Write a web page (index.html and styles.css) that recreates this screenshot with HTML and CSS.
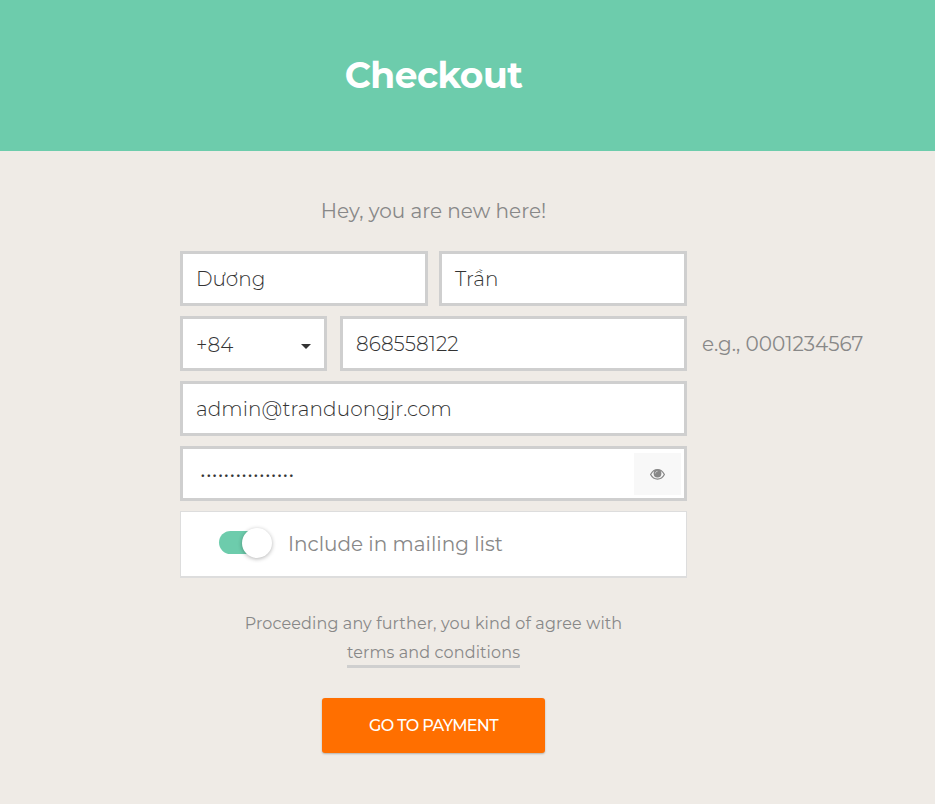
FILE: index.html
```
<!DOCTYPE html>
<html lang="en">
<head>
<meta charset="utf-8">
<title>Checkout</title>
<link rel="stylesheet" href="styles.css">
</head>
<body>
<header class="header"><h1 class="title"><span>Checkout</span></h1></header>
<main class="main">
  <p class="greeting"><span>Hey, you are new here!</span></p>
  <form class="form">
    <div class="row names">
      <div class="field"><span class="first-name">Dương</span></div>
      <div class="field"><span class="last-name">Trần</span></div>
    </div>
    <div class="row phone">
      <div class="field code"><span class="prefix">+84</span>
        <svg class="caret" width="10" height="5" viewBox="0 0 10 5"><path d="M0 0h10L5 5z" fill="#333"/></svg>
      </div>
      <div class="field"><span class="number">868558122</span></div>
      <span class="hint">e.g., 0001234567</span>
    </div>
    <div class="field"><span class="email">admin@tranduongjr.com</span></div>
    <div class="field password"><span class="dots">••••••••••••••••</span>
      <div class="reveal">
        <svg width="15" height="11" viewBox="0 0 15 11"><path d="M.6 5.500C2.200 2.500 4.700.7 7.500.7s5.300 1.800 6.900 4.800c-1.600 3-4.100 4.600-6.900 4.600S2.200 8.500.6 5.500z" fill="none" stroke="#888" stroke-width="1.200"/><circle cx="7.500" cy="4.500" r="3.900" fill="#888"/><path d="M5.400 4.400c0-1.200.9-2.100 2.100-2.100" fill="none" stroke="#ddd" stroke-width=".8"/></svg>
      </div>
    </div>
    <div class="mailing">
      <div class="switch"><div class="knob"></div></div>
      <span class="mailing-label">Include in mailing list</span>
    </div>
  </form>
  <p class="legal"><span class="proceed">Proceeding any further, you kind of agree with</span><br><a class="terms">terms and conditions</a></p>
  <button class="pay" type="button"><span>GO TO PAYMENT</span></button>
</main>
</body>
</html>
```
FILE: styles.css
```
* { box-sizing: border-box; }
body {
  margin: 0;
  min-height: 804px;
  background: #efebe6;
  color: #888;
  font-family: Montserrat, Inter, sans-serif;
  font-size: 20px;
  font-weight: 400;
}
.header {
  height: 151px;
  padding: 0 68px 2px 0;
  background: #6dccac;
  display: flex;
  align-items: center;
  justify-content: center;
}
.title {
  margin: 0;
  color: #fff;
  font-size: 36px;
  letter-spacing: -.5px;
  font-weight: 700;
  line-height: 44px;
}
.main {
  padding: 45px 68px 0 0;
  display: flex;
  flex-direction: column;
  align-items: center;
}
.greeting { margin: 0 0 25px; line-height: 30px; }
.form { width: 507px; display: flex; flex-direction: column; gap: 10px; }
.row { display: grid; }
.names { grid-template-columns: 1fr 1fr; gap: 11px; }
.phone { grid-template-columns: 147px 347px max-content; column-gap: 13px; align-items: center; }
.field {
  height: 55px;
  padding: 0 13px;
  background: #fff;
  border: 3px solid #cfcfcf;
  color: #333;
  font-weight: 300;
  letter-spacing: .1px;
  display: flex;
  align-items: center;
}
.field span, .hint, .mailing-label { white-space: nowrap; }
.code, .password { justify-content: space-between; }
.code { padding-top: 2px; }
.caret { margin-top: 3px; }
.hint { margin-left: 2px; }
.password { padding: 0 3px 0 17px; }
.dots { letter-spacing: .300px; }
.reveal {
  width: 47px;
  height: 42px;
  padding-top: 1px;
  background: #f8f8f8;
  display: flex;
  align-items: center;
  justify-content: center;
}
.mailing {
  height: 67px;
  padding: 0 0 2px 38px;
  background: #fff;
  border: 1px solid #ddd;
  border-bottom-width: 2px;
  display: flex;
  align-items: center;
}
.mailing-label { padding-top: 2px; }
.switch {
  width: 53px;
  height: 23px;
  margin: 0 16px 1px 0;
  border-radius: 12px;
  background: linear-gradient(90deg, #6dccac 40px, transparent 40px);
  display: flex;
  align-items: center;
  justify-content: flex-end;
}
.knob {
  width: 30px;
  height: 30px;
  margin-top: 1px;
  flex: none;
  border-radius: 50%;
  background: #fff;
  box-shadow: 0 1px 4px rgba(0, 0, 0, .3);
}
.legal { margin: 31px 0 0; font-size: 16px; letter-spacing: .13px; line-height: 29px; text-align: center; }
.terms { border-bottom: 3px solid #cfcfcf; padding-bottom: 3px; }
.pay {
  width: 223px;
  height: 55px;
  margin-top: 31px;
  padding: 0;
  border: 0;
  border-radius: 3px;
  background: #ff6f00;
  color: #fff;
  font: 500 16px Montserrat, Inter, sans-serif;
  letter-spacing: -.65px;
  box-shadow: 0 1px 2px rgba(0, 0, 0, .25);
}
```
